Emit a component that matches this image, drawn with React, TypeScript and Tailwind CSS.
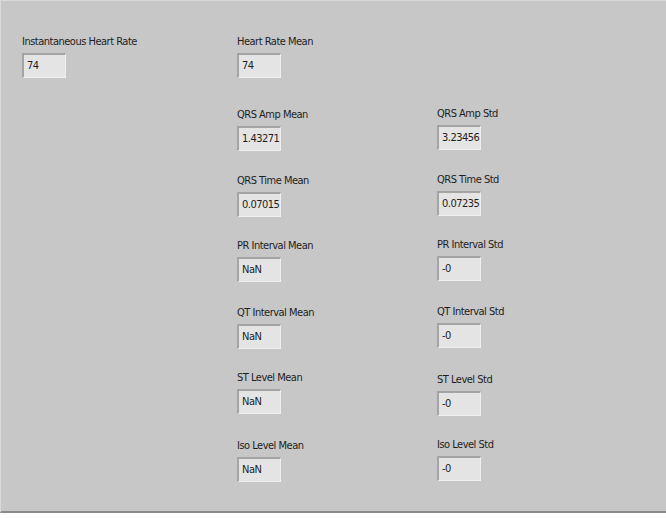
const font = { fontFamily: '"DejaVu Sans Condensed", "Liberation Sans", sans-serif' };

type Field = { label: string; value: string; mt: string };

const middle: Field[] = [
  { label: "Heart Rate Mean", value: "74", mt: "mt-[34px]" },
  { label: "QRS Amp Mean", value: "1.43271", mt: "mt-[30px]" },
  { label: "QRS Time Mean", value: "0.07015", mt: "mt-[23px]" },
  { label: "PR Interval Mean", value: "NaN", mt: "mt-[22px]" },
  { label: "QT Interval Mean", value: "NaN", mt: "mt-[24px]" },
  { label: "ST Level Mean", value: "NaN", mt: "mt-[22px]" },
  { label: "Iso Level Mean", value: "NaN", mt: "mt-[25px]" },
];

const right: Field[] = [
  { label: "QRS Amp Std", value: "3.23456", mt: "mt-[106px]" },
  { label: "QRS Time Std", value: "0.0723591", mt: "mt-[23px]" },
  { label: "PR Interval Std", value: "-0", mt: "mt-[22px]" },
  { label: "QT Interval Std", value: "-0", mt: "mt-[24px]" },
  { label: "ST Level Std", value: "-0", mt: "mt-[25px]" },
  { label: "Iso Level Std", value: "-0", mt: "mt-[22px]" },
];

function Indicator({ label, value, mt }: Field) {
  return (
    <div className={`${mt} flex flex-col`}>
      <div className="h-[14px] text-[11px] leading-[14px] tracking-[-0.5px] text-[#1e1e1e] whitespace-nowrap">{label}</div>
      <div className="mt-[4px] h-[25px] w-[44px] overflow-hidden border-t-2 border-l-2 border-b border-r border-t-[#a4a4a4] border-l-[#a4a4a4] border-b-[#efefef] border-r-[#efefef] bg-[#e4e4e4] pl-[3px] text-[11px] leading-[21px] tracking-[-0.5px] text-[#1e1e1e] whitespace-nowrap">
        {value}
      </div>
    </div>
  );
}

export default function App() {
  return (
    <div style={font} className="w-[666px] h-[519px] bg-white flex flex-col">
      <div className="h-[513px] bg-[#c7c7c7] border-t border-l border-t-[#dadada] border-l-[#dadada] border-b-2 border-b-[#8a8a8a] flex">
        <div className="ml-[21px] w-[215px]">
          <Indicator label="Instantaneous Heart Rate" value="74" mt="mt-[34px]" />
        </div>
        <div className="w-[200px] flex flex-col">
          {middle.map((f) => (
            <Indicator key={f.label} {...f} />
          ))}
        </div>
        <div className="flex flex-col">
          {right.map((f) => (
            <Indicator key={f.label} {...f} />
          ))}
        </div>
      </div>
    </div>
  );
}
